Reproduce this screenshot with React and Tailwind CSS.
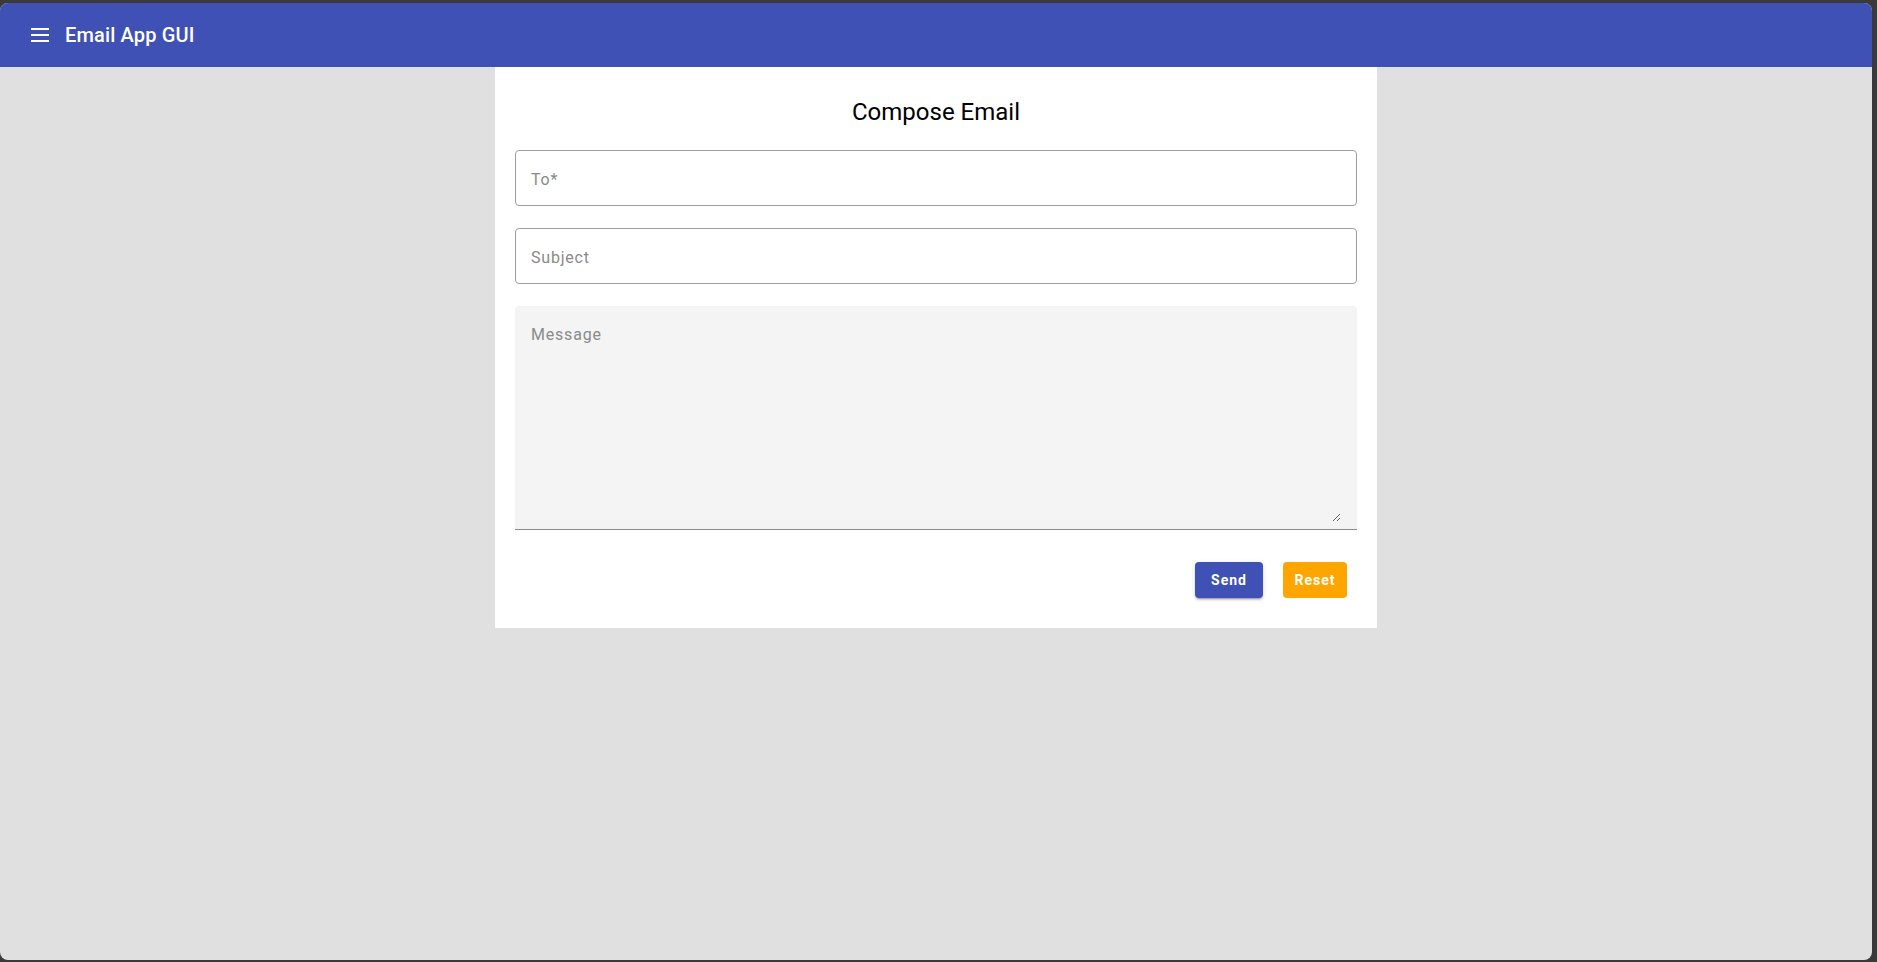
import React from "react";

function MenuIcon() {
  return (
    <svg width="24" height="24" viewBox="0 0 24 24" fill="white">
      <rect x="3" y="5" width="18" height="2" />
      <rect x="3" y="11" width="18" height="2" />
      <rect x="3" y="17" width="18" height="2" />
    </svg>
  );
}

export default function App() {
  return (
    <div className="h-screen bg-[#3a3a3a] pt-[3px] pr-[5px] pb-[2px] font-['Roboto',sans-serif]">
      <div className="h-full rounded-lg overflow-hidden bg-[#e0e0e0] flex flex-col">
        <header className="h-16 shrink-0 bg-[#3f51b5] flex items-center pl-[28px]">
          <MenuIcon />
          <h1 className="ml-[13px] text-white text-[20px] font-medium tracking-[0.15px]">
            Email App GUI
          </h1>
        </header>

        <main className="flex-1">
          <div className="w-[882px] mx-auto bg-white px-5 pt-[29px] pb-[30px]">
            <h2 className="h-8 leading-8 text-center text-[24px] text-black">
              Compose Email
            </h2>

            <div className="mt-[22px] flex flex-col gap-[22px]">
              <input
                placeholder="To*"
                className="h-14 w-full rounded border border-[#9e9e9e] px-[15px] pt-[2px] text-base tracking-[0.8px] text-black placeholder:text-[#8a8a8a] outline-none"
              />
              <input
                placeholder="Subject"
                className="h-14 w-full rounded border border-[#9e9e9e] px-[15px] pt-[2px] text-base tracking-[0.8px] text-black placeholder:text-[#8a8a8a] outline-none"
              />
              <div className="flex bg-[#f4f4f4] rounded-t border-b border-[#8c8c8c] pt-[17px] pl-4 pr-4 pb-[7px]">
                <textarea
                  placeholder="Message"
                  className="h-[199px] w-full resize-y bg-transparent text-base leading-6 tracking-[0.8px] text-black placeholder:text-[#8a8a8a] outline-none"
                />
              </div>
            </div>

            <div className="mt-[32px] flex justify-end gap-5 pr-[10px]">
              <button className="w-[68px] h-9 rounded bg-[#3f51b5] text-white text-sm font-bold tracking-[1px] shadow-[0_3px_1px_-2px_rgba(0,0,0,0.2),0_2px_2px_0_rgba(0,0,0,0.14),0_1px_5px_0_rgba(0,0,0,0.12)]">
                Send
              </button>
              <button className="w-16 h-9 rounded bg-[#ffa500] text-white text-sm font-bold tracking-[1px]">
                Reset
              </button>
            </div>
          </div>
        </main>
      </div>
    </div>
  );
}
